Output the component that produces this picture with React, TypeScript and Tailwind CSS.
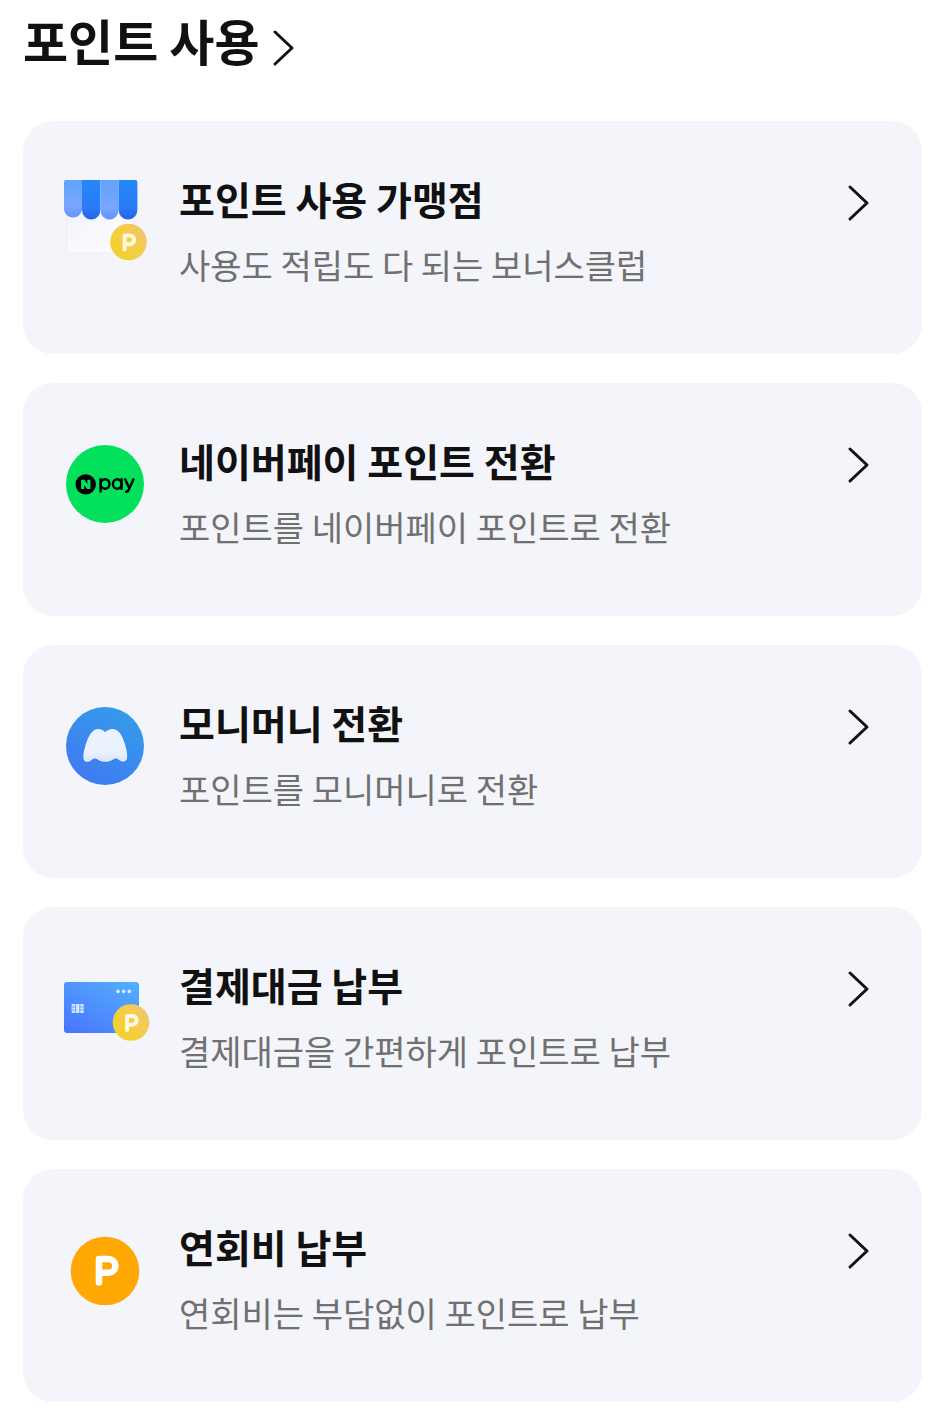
import React, { useId } from 'react'

type IconProps = { className?: string }

function Chevron({ className }: IconProps) {
  return (
    <svg viewBox="0 0 24 40" className={className} fill="none" stroke="currentColor" strokeWidth="3" strokeLinecap="round" strokeLinejoin="round" aria-hidden="true">
      <path d="M3 4 L20 20 L3 36" />
    </svg>
  )
}

function Coin({ cx, cy }: { cx: number; cy: number }) {
  const id = useId()
  return (
    <g>
      <defs>
        <linearGradient id={id} x1="0.2" y1="0.9" x2="1" y2="0.3">
          <stop offset="0" stopColor="#f3d02f" />
          <stop offset="0.65" stopColor="#f4ce4c" />
          <stop offset="1" stopColor="#eec572" />
        </linearGradient>
      </defs>
      <circle cx={cx} cy={cy} r="18.3" fill={`url(#${id})`} />
      <path
        transform={`translate(${cx} ${cy})`}
        d="M-3.9 7.4 V-6.6 H1.2 A4.4 4.4 0 0 1 1.2 2.2 H-3.9"
        fill="none"
        stroke="#fff8df"
        strokeWidth="4"
        strokeLinecap="round"
        strokeLinejoin="round"
      />
    </g>
  )
}

function StoreIcon() {
  return (
    <svg viewBox="0 0 96 96" className="mt-1 size-24" aria-hidden="true">
      <defs>
        <linearGradient id="awning-light" x1="0" y1="0" x2="0" y2="1">
          <stop offset="0" stopColor="#5fa4f8" />
          <stop offset="0.7" stopColor="#7aa6ff" />
          <stop offset="1" stopColor="#6094f4" />
        </linearGradient>
        <linearGradient id="awning-dark" x1="0" y1="0" x2="0" y2="1">
          <stop offset="0" stopColor="#2489f5" />
          <stop offset="0.7" stopColor="#2a7afa" />
          <stop offset="1" stopColor="#2563e2" />
        </linearGradient>
        <linearGradient id="store-wall" x1="0" y1="0" x2="1" y2="1">
          <stop offset="0" stopColor="#f0f1fb" />
          <stop offset="0.5" stopColor="#f9f9fe" />
          <stop offset="1" stopColor="#fbfbfe" />
        </linearGradient>
      </defs>
      <rect x="9.5" y="30" width="67" height="46" rx="3" fill="url(#store-wall)" stroke="#eeeff6" strokeWidth="1.6" />
      <path d="M9 3 H25 V33 A9.2 9.6 0 0 1 7 33 V5 Q7 3 9 3 Z" fill="url(#awning-light)" />
      <path d="M25 3 H43.4 V33 A9.2 9.6 0 0 1 25 33 Z" fill="url(#awning-dark)" />
      <path d="M43.4 3 H61.6 V33 A9.1 9.6 0 0 1 43.4 33 Z" fill="url(#awning-light)" />
      <path d="M61.6 3 H78 Q80.4 3 80.4 5.4 V33 A9.4 9.6 0 0 1 61.6 33 Z" fill="url(#awning-dark)" />
      <Coin cx={71.5} cy={65} />
    </svg>
  )
}

function NaverPayIcon() {
  return (
    <svg viewBox="0 0 96 96" className="mt-1 size-24" role="img" aria-label="N pay">
      <circle cx="48" cy="45" r="39" fill="#03e05c" />
      <circle cx="28.7" cy="45.4" r="10.2" fill="#000" />
      <path d="M24.1 50.1 V40.7 H27.5 L30.3 44.9 V40.7 H33.4 V50.1 H30.1 L27.2 45.9 V50.1 Z" fill="#03e05c" />
      <g fill="none" stroke="#000" strokeWidth="2.4">
        <ellipse cx="48.1" cy="45" rx="4.4" ry="4.7" />
        <path d="M43.6 39.2 V53.6" />
        <ellipse cx="60.2" cy="45" rx="4.3" ry="4.7" />
        <path d="M64.6 39.2 V50.8" />
        <path d="M67.8 39.4 L72.4 49.6 M76.8 39.4 L71.4 51.4 Q70.6 53.2 68.2 52.4" />
      </g>
    </svg>
  )
}

function MonimoIcon() {
  return (
    <svg viewBox="0 0 96 96" className="mt-1 size-24" aria-hidden="true">
      <defs>
        <linearGradient id="monimo-disc" x1="0.25" y1="1" x2="0.8" y2="0.1">
          <stop offset="0" stopColor="#3f78f3" />
          <stop offset="0.5" stopColor="#3a8aed" />
          <stop offset="1" stopColor="#349bea" />
        </linearGradient>
        <linearGradient id="monimo-shape" x1="0" y1="0" x2="0" y2="1">
          <stop offset="0" stopColor="#ebf3ff" />
          <stop offset="0.75" stopColor="#e8f0fd" />
          <stop offset="1" stopColor="#d7e2fa" />
        </linearGradient>
      </defs>
      <circle cx="48" cy="45" r="39" fill="url(#monimo-disc)" />
      <path
        d="M41 28 C44.5 28 46.5 29.4 48.2 31.2 C50 29.4 52.2 28 55.6 28 C63 28 67 38.5 69 47 C69.8 50.5 70.2 53.5 70.2 56 C70.2 61 66 61.6 63 59.8 L60.4 58 C59 57.2 57.8 57.4 56.6 58.2 C54.5 59.8 51.5 61 48.3 61 C45 61 42 59.8 40 58.2 C38.8 57.3 37.3 57.3 36 58.1 L33.4 60 C30 62 26.3 61 26.3 56 C26.3 53 27 50 27.8 47 C30 38.5 34 28 41 28 Z"
        transform="translate(0 1)"
        fill="#3269d6"
        opacity="0.45"
      />
      <path
        d="M41 28 C44.5 28 46.5 29.4 48.2 31.2 C50 29.4 52.2 28 55.6 28 C63 28 67 38.5 69 47 C69.8 50.5 70.2 53.5 70.2 56 C70.2 61 66 61.6 63 59.8 L60.4 58 C59 57.2 57.8 57.4 56.6 58.2 C54.5 59.8 51.5 61 48.3 61 C45 61 42 59.8 40 58.2 C38.8 57.3 37.3 57.3 36 58.1 L33.4 60 C30 62 26.3 61 26.3 56 C26.3 53 27 50 27.8 47 C30 38.5 34 28 41 28 Z"
        fill="url(#monimo-shape)"
      />
    </svg>
  )
}

function CardIcon() {
  return (
    <svg viewBox="0 0 96 96" className="mt-1 size-24" aria-hidden="true">
      <defs>
        <linearGradient id="pay-card" x1="0.1" y1="1" x2="0.9" y2="0">
          <stop offset="0" stopColor="#4a76fd" />
          <stop offset="1" stopColor="#52aefe" />
        </linearGradient>
      </defs>
      <rect x="7" y="19" width="75" height="51" rx="3" fill="url(#pay-card)" />
      <g fill="#d9edff">
        <circle cx="61" cy="28.4" r="1.8" />
        <circle cx="66.7" cy="28.4" r="1.8" />
        <circle cx="72.3" cy="28.4" r="1.8" />
      </g>
      <rect x="14.6" y="41" width="12.2" height="9" rx="1" fill="#d3e4ff" />
      <path d="M18.6 41 V50 M22.8 41 V50 M14.6 44 H18.6 M14.6 47 H18.6 M22.8 44 H26.8 M22.8 47 H26.8" stroke="#5e93fd" strokeWidth="0.8" />
      <Coin cx={74} cy={59.5} />
    </svg>
  )
}

function PointIcon() {
  return (
    <svg viewBox="0 0 96 96" className="mt-1 size-24" aria-hidden="true">
      <circle cx="48" cy="46" r="34.3" fill="#ffa703" />
      <path d="M42 57.5 V34 H51.5 A6.9 6.9 0 0 1 51.5 47.8 H42" fill="none" stroke="#fff" strokeWidth="6.6" strokeLinecap="round" strokeLinejoin="round" />
    </svg>
  )
}

const menus = [
  { title: '포인트 사용 가맹점', desc: '사용도 적립도 다 되는 보너스클럽', icon: StoreIcon },
  { title: '네이버페이 포인트 전환', desc: '포인트를 네이버페이 포인트로 전환', icon: NaverPayIcon },
  { title: '모니머니 전환', desc: '포인트를 모니머니로 전환', icon: MonimoIcon },
  { title: '결제대금 납부', desc: '결제대금을 간편하게 포인트로 납부', icon: CardIcon },
  { title: '연회비 납부', desc: '연회비는 부담없이 포인트로 납부', icon: PointIcon },
]

export default function App() {
  return (
    <main className="bg-white pt-2 pr-[18px] pb-1.5 pl-[23px] font-['Noto_Sans_CJK_KR',sans-serif] text-[#111]">
      <h1 className="mb-[49px] text-[49px] leading-[64px] font-bold">
        <a href="#points" className="inline-flex items-center gap-3">
          포인트 사용
          <Chevron className="mt-4 h-10 w-6" />
        </a>
      </h1>

      <ul className="flex flex-col gap-[29px]">
        {menus.map(({ title, desc, icon: Icon }) => (
          <li key={title}>
            <a href="#menu" className="flex items-start rounded-[30px] bg-[#f4f5fb] pt-[52px] pr-[51px] pb-[65px] pl-[34px]">
              <Icon />
              <div className="ml-[26px] flex-1">
                <h2 className="text-[39px] leading-[50px] font-bold">{title}</h2>
                <p className="mt-[18px] text-[34px] leading-[48px] text-[#707070]">{desc}</p>
              </div>
              <Chevron className="mt-2.5 h-10 w-6" />
            </a>
          </li>
        ))}
      </ul>
    </main>
  )
}
